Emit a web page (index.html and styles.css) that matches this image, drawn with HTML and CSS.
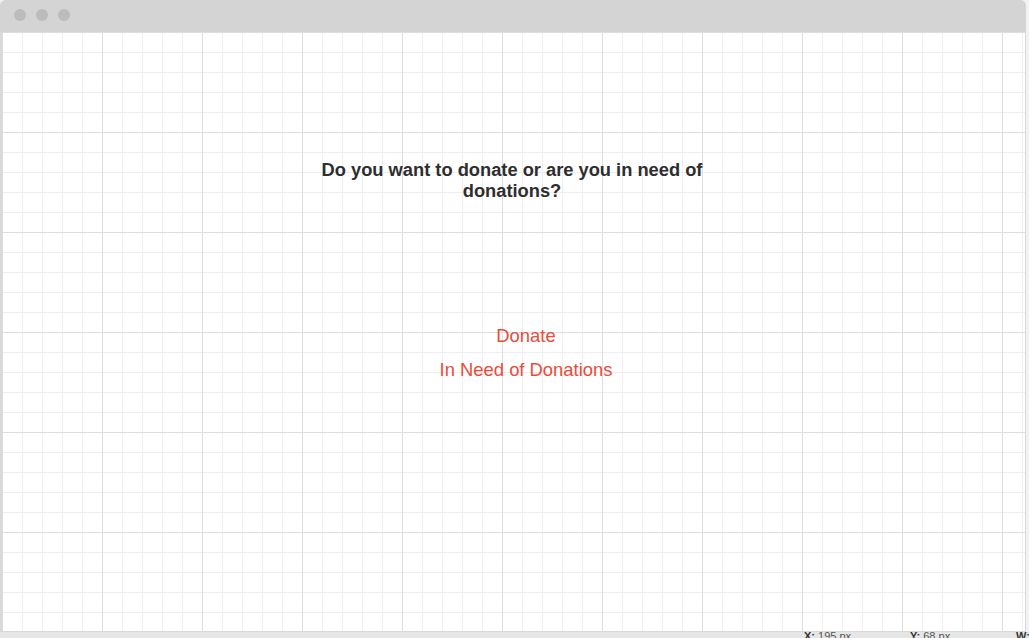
FILE: index.html
```html
<!DOCTYPE html>
<html>
<head>
<meta charset="utf-8">
<link rel="stylesheet" href="styles.css">
</head>
<body>
<div class="page">
  <div class="window">
    <div class="titlebar">
      <span class="dot"></span><span class="dot"></span><span class="dot"></span>
    </div>
    <div class="canvas">
      <h1 class="question">Do you want to donate or are you in need of donations?</h1>
      <ul class="choices">
        <li><a class="choice" href="#">Donate</a></li>
        <li><a class="choice" href="#">In Need of Donations</a></li>
      </ul>
    </div>
  </div>
  <div class="status">
    <span class="coord coord-x"><b>X:</b> 195 px</span>
    <span class="coord coord-y"><b>Y:</b> 68 px</span>
    <span class="coord coord-w"><b>W:</b></span>
  </div>
</div>
</body>
</html>
```

FILE: styles.css
```css
html, body {
  margin: 0;
  padding: 0;
  background: #f2f2f2;
  width: 1029px;
  height: 638px;
  overflow: hidden;
  font-family: "Liberation Sans", Arial, sans-serif;
}

.page {
  display: flex;
  flex-direction: column;
  width: 1029px;
  height: 638px;
}

.window {
  width: 1026px;
  height: 632px;
  display: flex;
  flex-direction: column;
  background: #d9d9d9;
  border-radius: 6px 6px 0 0;
  box-sizing: border-box;
  padding: 0 1px 1px 2px;
}

.titlebar {
  height: 32px;
  flex: none;
  display: flex;
  align-items: center;
  gap: 10px;
  padding-left: 14px;
  margin-left: -2px;
  margin-right: -1px;
  background: #d4d4d4;
  border-radius: 6px 6px 0 0;
  box-sizing: border-box;
}

.dot {
  width: 12px;
  height: 12px;
  border-radius: 50%;
  background: #bcbcbc;
  margin-top: -2px;
}

.canvas {
  flex: 1;
  background-color: #ffffff;
  background-image:
    linear-gradient(to right, #dedede 1px, transparent 1px),
    linear-gradient(to bottom, #dedede 1px, transparent 1px),
    linear-gradient(to right, #eeeeee 1px, transparent 1px),
    linear-gradient(to bottom, #eeeeee 1px, transparent 1px);
  background-size: 100px 100px, 100px 100px, 20px 20px, 20px 20px;
  background-position: 0 0;
  display: flex;
  flex-direction: column;
  align-items: center;
  padding-top: 127px;
  box-sizing: border-box;
}

.question {
  margin: 0;
  width: 410px;
  text-align: center;
  font-size: 18.3px;
  font-weight: bold;
  line-height: 21px;
  color: #2e2e2e;
  margin-left: -3px;
}

.choices {
  list-style: none;
  margin: 124px 0 0 0;
  padding: 0 0 0 25px;
  display: flex;
  flex-direction: column;
  align-items: center;
  gap: 13px;
}

.choice {
  font-size: 18.4px;
  line-height: 21px;
  color: #e74c3c;
  text-decoration: none;
}

.status {
  height: 6px;
  position: relative;
  background: #e6e6e6;
  font-size: 11px;
  color: #555;
}

.coord {
  position: absolute;
  top: -2px;
  line-height: 13px;
  white-space: nowrap;
}

.coord b { color: #333; }
.coord-x { left: 804px; }
.coord-y { left: 910px; }
.coord-w { left: 1016px; }
```
